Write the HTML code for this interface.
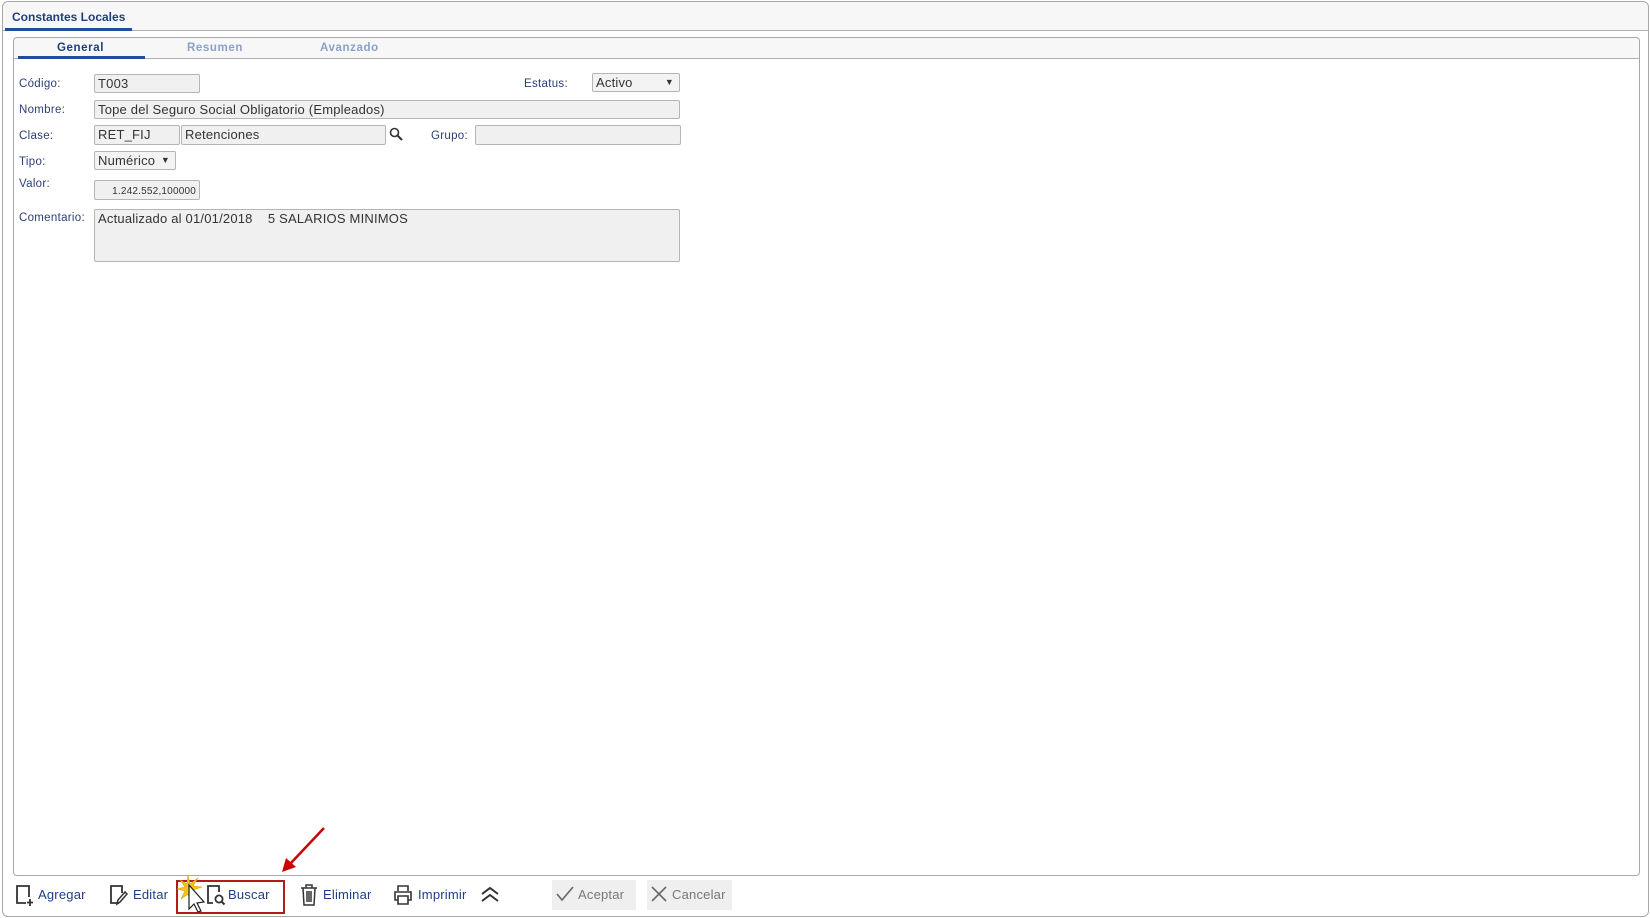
<!DOCTYPE html>
<html><head><meta charset="utf-8"><style>
*{box-sizing:border-box;margin:0;padding:0}
body{width:1650px;height:918px;background:#fff;font-family:"Liberation Sans",Tahoma,sans-serif;position:relative;overflow:hidden}
.abs{position:absolute}
.outer{left:2px;top:1px;width:1647px;height:916px;border:1px solid #a8a8a8;border-radius:6px}
.hdr{left:3px;top:2px;width:1645px;height:29px;background:#f7f7f7;border-bottom:1px solid #b0b0b0;border-radius:6px 6px 0 0}
.title{left:12px;top:10px;font-size:12px;font-weight:bold;color:#1d3f7a}
.tul{left:5px;top:28px;width:127px;height:3px;background:#1f4e9a}
.inner{left:13px;top:37px;width:1627px;height:839px;border:1px solid #a8a8a8;border-radius:4px}
.tabbar{left:14px;top:38px;width:1625px;height:21px;background:#f7f7f7;border-bottom:1px solid #b0b0b0;border-radius:4px 4px 0 0}
.tab{top:42px;font-size:11.5px;font-weight:bold;color:#8aa2c8;letter-spacing:.6px}
.lbl{font-size:11.5px;color:#2c3e78;left:19px;letter-spacing:.3px}
.inp{background:#f0f0f0;border:1px solid #b5b5b5;border-radius:2px;font-size:13px;color:#333;padding:1px 3px;line-height:15px;white-space:nowrap;letter-spacing:.2px}
.tb{top:887px;font-size:13px;color:#1f3d87;letter-spacing:.2px}
</style></head><body>
<div class="abs outer"></div>
<div class="abs hdr"></div>
<div class="abs title">Constantes Locales</div>
<div class="abs tul"></div>
<div class="abs inner"></div>
<div class="abs tabbar"></div>
<div class="abs tab" style="left:57px;color:#1d3f7a">General</div>
<div class="abs" style="left:18px;top:56px;width:127px;height:3px;background:#1f4e9a"></div>
<div class="abs tab" style="left:187px">Resumen</div>
<div class="abs tab" style="left:320px">Avanzado</div>

<div class="abs lbl" style="top:78px">Código:</div>
<div class="abs inp" style="left:94px;top:74px;width:106px;height:19px">T003</div>
<div class="abs lbl" style="left:524px;top:78px">Estatus:</div>
<div class="abs inp" style="left:592px;top:73px;width:88px;height:19px;background:#f3f3f3">Activo<span style="position:absolute;right:5px;top:1px;font-size:9px">▼</span></div>

<div class="abs lbl" style="top:104px">Nombre:</div>
<div class="abs inp" style="left:94px;top:100px;width:586px;height:19px">Tope del Seguro Social Obligatorio (Empleados)</div>

<div class="abs lbl" style="top:130px">Clase:</div>
<div class="abs inp" style="left:94px;top:125px;width:86px;height:20px">RET_FIJ</div>
<div class="abs inp" style="left:181px;top:125px;width:205px;height:20px">Retenciones</div>
<svg class="abs" style="left:389px;top:127px" width="14" height="14" viewBox="0 0 14 14"><circle cx="5.5" cy="5.5" r="4" fill="none" stroke="#333" stroke-width="1.6"/><line x1="8.5" y1="8.5" x2="13" y2="13" stroke="#333" stroke-width="2"/></svg>
<div class="abs lbl" style="left:431px;top:130px">Grupo:</div>
<div class="abs inp" style="left:475px;top:125px;width:206px;height:20px"></div>

<div class="abs lbl" style="top:156px">Tipo:</div>
<div class="abs inp" style="left:94px;top:151px;width:82px;height:19px;background:#f3f3f3">Numérico<span style="position:absolute;right:5px;top:1px;font-size:9px">▼</span></div>

<div class="abs lbl" style="top:178px">Valor:</div>
<div class="abs inp" style="left:94px;top:180px;width:106px;height:20px;font-size:10px;text-align:right;padding-top:3px">1.242.552,100000</div>

<div class="abs lbl" style="top:212px">Comentario:</div>
<div class="abs inp" style="left:94px;top:209px;width:586px;height:53px;white-space:pre">Actualizado al 01/01/2018    5 SALARIOS MINIMOS</div>

<svg class="abs" style="left:15px;top:884px" width="20" height="22" viewBox="0 0 20 22"><path d="M11 19H2V2h12v11" fill="none" stroke="#333" stroke-width="1.8"/><path d="M15 15v7M12 18.5h6" stroke="#333" stroke-width="1.8"/></svg>
<div class="abs tb" style="left:38px">Agregar</div>
<svg class="abs" style="left:109px;top:884px" width="20" height="22" viewBox="0 0 20 22"><path d="M10 19H2V2h11v7" fill="none" stroke="#333" stroke-width="1.8"/><path d="M8 20l1-4 7-8 2 2-7 8z" fill="none" stroke="#333" stroke-width="1.5"/></svg>
<div class="abs tb" style="left:133px">Editar</div>
<div class="abs" style="left:176px;top:880px;width:109px;height:34px;border:2px solid #b01c1c"></div>
<svg class="abs" style="left:206px;top:884px" width="20" height="22" viewBox="0 0 20 22"><path d="M7 19H2V2h11v6" fill="none" stroke="#333" stroke-width="1.8"/><circle cx="13" cy="15" r="3.6" fill="none" stroke="#333" stroke-width="1.8"/><path d="M15.5 17.5l3 3" stroke="#333" stroke-width="2"/></svg>
<div class="abs tb" style="left:228px">Buscar</div>
<svg class="abs" style="left:176px;top:873px" width="34" height="42" viewBox="0 0 34 42"><path d="M12 2l2 9 8-6-5 8 9 1-9 3 6 7-8-4 0 9-3-8-7 5 4-8-8-2 8-2-5-7 7 4z" fill="#f5c518" stroke="#e0a000" stroke-width=".6"/><path d="M13 12v24l5-5 4 8 3-1-4-8 7-1z" fill="#fff" stroke="#222" stroke-width="1.2"/></svg>
<svg class="abs" style="left:300px;top:884px" width="18" height="22" viewBox="0 0 18 22"><path d="M1 4h16M6 4V1h6v3M3 4l1 17h10l1-17M7 7v11M9 7v11M11 7v11" fill="none" stroke="#333" stroke-width="1.5"/></svg>
<div class="abs tb" style="left:323px">Eliminar</div>
<svg class="abs" style="left:393px;top:884px" width="20" height="22" viewBox="0 0 20 22"><path d="M5 7V2h10v5M5 16H2V8h16v8h-3M5 12h10v8H5z" fill="none" stroke="#333" stroke-width="1.6"/></svg>
<div class="abs tb" style="left:418px">Imprimir</div>
<svg class="abs" style="left:480px;top:886px" width="20" height="16" viewBox="0 0 20 16"><path d="M2 8l8-6 8 6M2 15l8-6 8 6" fill="none" stroke="#333" stroke-width="2"/></svg>
<div class="abs" style="left:552px;top:880px;width:84px;height:30px;background:#efefef"></div>
<svg class="abs" style="left:556px;top:886px" width="18" height="16" viewBox="0 0 18 16"><path d="M1 8l5 6L17 1" fill="none" stroke="#666" stroke-width="1.6"/></svg>
<div class="abs tb" style="left:578px;color:#777">Aceptar</div>
<div class="abs" style="left:647px;top:880px;width:85px;height:30px;background:#efefef"></div>
<svg class="abs" style="left:651px;top:886px" width="16" height="16" viewBox="0 0 16 16"><path d="M1 1l14 14M15 1L1 15" stroke="#666" stroke-width="1.6"/></svg>
<div class="abs tb" style="left:672px;color:#777">Cancelar</div>
<svg class="abs" style="left:276px;top:822px" width="56" height="56" viewBox="0 0 56 56"><line x1="48" y1="6" x2="14" y2="42" stroke="#c00" stroke-width="2.5"/><path d="M6 50l4-14 10 9z" fill="#c00"/></svg>
</body></html>
